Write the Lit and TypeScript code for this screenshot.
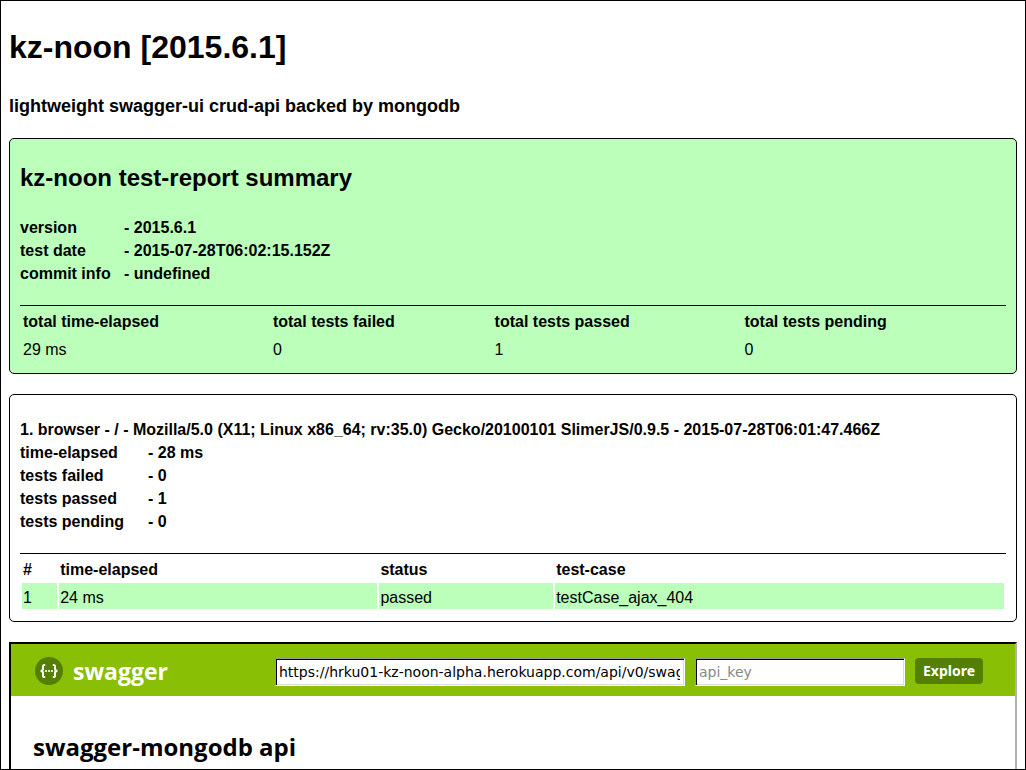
import { LitElement, html, css, svg } from "lit";
import { customElement } from "lit/decorators.js";

const summaryInfo = [
  ["version", "2015.6.1"],
  ["test date", "2015-07-28T06:02:15.152Z"],
  ["commit info", "undefined"],
];

const platformInfo = [
  ["time-elapsed", "28 ms"],
  ["tests failed", "0"],
  ["tests passed", "1"],
  ["tests pending", "0"],
];

const logo = svg`
  <circle cx="14" cy="14" r="14" fill="#547f00" />
  <g fill="none" stroke="#fff" stroke-width="2">
    <path d="M10.2 8H9.4Q8 8 8 9.6V11.8Q8 13.9 5.6 14Q8 14.1 8 16.2V18.4Q8 20 9.4 20H10.2" />
    <path d="M17.8 8H18.6Q20 8 20 9.6V11.8Q20 13.9 22.4 14Q20 14.1 20 16.2V18.4Q20 20 18.6 20H17.8" />
  </g>
  <g fill="#fff">
    <circle cx="11" cy="14" r="1.1" />
    <circle cx="14" cy="14" r="1.1" />
    <circle cx="17" cy="14" r="1.1" />
  </g>`;

@customElement("swagger-panel")
export class SwaggerPanel extends LitElement {
  static styles = css`
    :host {
      display: block;
      box-sizing: border-box;
      min-height: 600px;
      border: 2px solid #000;
      border-right-color: #b2b2b2;
      border-bottom-color: #b2b2b2;
      font-family: "Open Sans", "Noto Sans", sans-serif;
    }
    .bar {
      display: flex;
      align-items: flex-start;
      box-sizing: border-box;
      min-height: 52px;
      padding: 13px 32px 0 24px;
      background: #89bf04;
    }
    .brand {
      display: flex;
      align-items: center;
      gap: 10px;
      color: #fff;
      font-size: 23px;
      font-weight: 700;
      line-height: 28px;
      text-decoration: none;
    }
    .logo {
      display: block;
      width: 28px;
      height: 28px;
    }
    .form {
      display: flex;
      align-items: flex-start;
      gap: 10px;
      margin: 1px 0 0 auto;
    }
    .field {
      box-sizing: border-box;
      height: 28px;
      padding: 0 4px 0 3px;
      border: 1px solid #999;
      border-right-color: #fff;
      border-bottom-color: #fff;
      box-shadow: inset 1px 1px #000, inset -1px -1px #ddd;
      background: #fff;
      color: #000;
      font: 14px "DejaVu Sans", sans-serif;
    }
    .field::placeholder {
      color: #888;
      opacity: 1;
    }
    .url {
      width: 410px;
    }
    .key {
      width: 210px;
    }
    .explore {
      height: 26px;
      padding: 0 8px;
      border: 0;
      border-radius: 4px;
      background: #547f00;
      color: #fff;
      font: 700 14px/26px "Noto Sans", "Open Sans", sans-serif;
    }
    .title {
      margin: 35px 22px;
      font-size: 24px;
      line-height: 32px;
    }
  `;

  render() {
    return html`
      <header class="bar">
        <a class="brand" href="#swagger">
          <svg class="logo" viewBox="0 0 28 28" aria-hidden="true">${logo}</svg>
          swagger
        </a>
        <form class="form" @submit=${(e: Event) => e.preventDefault()}>
          <input
            class="field url"
            type="text"
            aria-label="API url"
            value="https://hrku01-kz-noon-alpha.herokuapp.com/api/v0/swagger.json"
          />
          <input class="field key" type="text" aria-label="API key" placeholder="api_key" />
          <button class="explore" type="submit">Explore</button>
        </form>
      </header>
      <h2 class="title">swagger-mongodb api</h2>
    `;
  }
}

@customElement("app-root")
export class AppRoot extends LitElement {
  static styles = css`
    :host {
      display: block;
      box-sizing: border-box;
      height: 100vh;
      overflow: hidden;
      padding: 26px 8px 0;
      border: 1px solid #000;
      background: #fff;
      color: #000;
      font: 16px/23px "Liberation Sans", Arial, sans-serif;
    }
    .name {
      margin: 0 0 27px;
      font-size: 32px;
      line-height: 40px;
    }
    .description {
      margin: 0 0 20px;
      font-size: 18px;
      line-height: 24px;
    }
    .card {
      margin-bottom: 20px;
      padding: 23px 10px 10px;
      border: 1px solid #000;
      border-radius: 5px;
    }
    .passed {
      background: #bfb;
    }
    .heading {
      margin: 0 0 23px;
      font-size: 24px;
      line-height: 31px;
    }
    .platform {
      margin: 0;
      font-size: 16px;
      line-height: 23px;
    }
    .info {
      display: grid;
      grid-template-columns: 104px 1fr;
      margin: 0 0 20px;
      font-weight: 700;
    }
    .info.wide {
      grid-template-columns: 128px 1fr;
    }
    .info dd {
      margin: 0;
    }
    .report {
      width: 100%;
      table-layout: fixed;
      border-top: 1px solid #000;
      border-spacing: 2px;
      text-align: left;
    }
    .report th {
      padding: 2px 1px 0;
    }
    .report td {
      padding: 3px 1px 0;
    }
    .quarter {
      width: 25.2%;
    }
    .fifth {
      width: 22.3%;
    }
    .index {
      width: 3.4%;
    }
    .elapsed {
      width: 32.4%;
    }
    .status {
      width: 17.6%;
    }
  `;

  private info(rows: string[][], extra = "") {
    return html`<dl class="info ${extra}">
      ${rows.map(([label, value]) => html`<dt>${label}</dt><dd>- ${value}</dd>`)}
    </dl>`;
  }

  render() {
    return html`
      <h1 class="name">kz-noon [2015.6.1]</h1>
      <h3 class="description">lightweight swagger-ui crud-api backed by mongodb</h3>
      <section class="card passed">
        <h2 class="heading">kz-noon test-report summary</h2>
        ${this.info(summaryInfo)}
        <table class="report">
          <thead>
            <tr>
              <th class="quarter">total time-elapsed</th>
              <th class="fifth">total tests failed</th>
              <th class="quarter">total tests passed</th>
              <th>total tests pending</th>
            </tr>
          </thead>
          <tbody>
            <tr><td>29 ms</td><td>0</td><td>1</td><td>0</td></tr>
          </tbody>
        </table>
      </section>
      <section class="card">
        <h4 class="platform">
          1. browser - / - Mozilla/5.0 (X11; Linux x86_64; rv:35.0) Gecko/20100101 SlimerJS/0.9.5 -
          2015-07-28T06:01:47.466Z
        </h4>
        ${this.info(platformInfo, "wide")}
        <table class="report">
          <thead>
            <tr>
              <th class="index">#</th>
              <th class="elapsed">time-elapsed</th>
              <th class="status">status</th>
              <th>test-case</th>
            </tr>
          </thead>
          <tbody>
            <tr class="passed"><td>1</td><td>24 ms</td><td>passed</td><td>testCase_ajax_404</td></tr>
          </tbody>
        </table>
      </section>
      <swagger-panel></swagger-panel>
    `;
  }
}
